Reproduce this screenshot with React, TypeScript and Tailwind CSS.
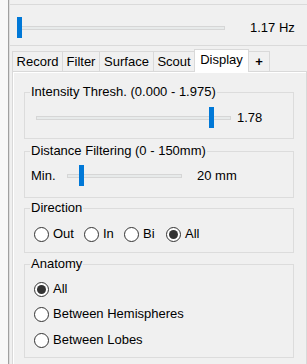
import React from "react";

function Slider({ widthCls, thumbCls }: { widthCls: string; thumbCls: string }) {
  return (
    <div className={`relative h-[21px] flex items-center shrink-0 ${widthCls}`}>
      <div className="w-full h-[4px] border border-[#d6d6d6] bg-[#e7eaea]" />
      <div className={`absolute top-0 w-[5px] h-[21px] bg-[#0078d7] ${thumbCls}`} />
    </div>
  );
}

function Radio({ checked }: { checked?: boolean }) {
  return (
    <div className="w-[15px] h-[15px] rounded-full border border-[#333333] bg-white flex items-center justify-center shrink-0">
      {checked && <div className="w-[9px] h-[9px] rounded-full bg-[#333333]" />}
    </div>
  );
}

function Group({
  title,
  mtCls,
  padCls,
  children,
}: {
  title: string;
  mtCls: string;
  padCls: string;
  children: React.ReactNode;
}) {
  return (
    <fieldset className={`w-[270px] border border-[#dcdcdc] pl-[5px] pr-[5px] m-0 min-w-0 ${mtCls} ${padCls}`}>
      <legend className="px-[1px] leading-[14px] text-[13px]">{title}</legend>
      {children}
    </fieldset>
  );
}

export default function App() {
  const tabBase =
    "h-[20px] flex items-center justify-center border-t border-[#d9d9d9] bg-[#f0f0f0] leading-[14px]";
  return (
    <div className="w-[307px] h-[364px] overflow-hidden bg-[#f0f0f0] flex font-['Liberation_Sans',Arial,sans-serif] text-[13px] text-black">
      <div className="w-[8px] bg-[#f8f8f8]" />
      <div className="w-[1px] bg-[#a0a0a0]" />
      <div className="w-[1px] bg-[#dedede]" />
      <div className="w-[297px] flex flex-col">
        <div className="h-[4px]" />
        <div className="h-[1px] bg-[#dadada]" />
        <div className="h-[40px] pl-[7px] pt-[12px] flex items-start">
          <Slider widthCls="w-[208px]" thumbCls="left-0" />
          <div className="ml-[25px] h-[21px] flex items-center">1.17 Hz</div>
        </div>
        <div className="h-[1px] bg-[#dadada]" />
        <div className="h-[25px] pl-[2px] flex items-end">
          <div className={`${tabBase} w-[50px] border-l`}>Record</div>
          <div className={`${tabBase} w-[37px] border-l`}>Filter</div>
          <div className={`${tabBase} w-[54px] border-l`}>Surface</div>
          <div className={`${tabBase} w-[41px] border-l`}>Scout</div>
          <div className="relative z-10 -mb-[1px] h-[23px] w-[55px] border-t border-l border-r border-[#d9d9d9] bg-white flex items-start justify-center pt-[3px] leading-[14px]">
            Display
          </div>
          <div className={`${tabBase} w-[21px] border-r font-bold`}>+</div>
        </div>
        <div className="flex-1 ml-[2px] border-t border-l border-r border-[#d9d9d9]">
          <div className="h-full border-t border-l border-white pl-[10px] flex flex-col">
            <Group title="Intensity Thresh. (0.000 - 1.975)" mtCls="mt-[12px]" padCls="pt-[8px] pb-[10px]">
              <div className="flex items-center ml-[6px]">
                <Slider widthCls="w-[195px]" thumbCls="left-[173px]" />
                <div className="ml-[6px]">1.78</div>
              </div>
            </Group>
            <Group title="Distance Filtering (0 - 150mm)" mtCls="mt-[5px]" padCls="pt-[7px] pb-[11px]">
              <div className="flex items-center ml-[1px]">
                <div className="w-[36px]">Min.</div>
                <Slider widthCls="w-[115px]" thumbCls="left-[12px]" />
                <div className="ml-[15px]">20 mm</div>
              </div>
            </Group>
            <Group title="Direction" mtCls="mt-[3px]" padCls="pt-[11px] pb-[10px]">
              <div className="flex items-center ml-[4px] h-[16px]">
                <div className="w-[50px] flex items-center gap-[4px]">
                  <Radio />
                  <span>Out</span>
                </div>
                <div className="w-[40px] flex items-center gap-[4px]">
                  <Radio />
                  <span>In</span>
                </div>
                <div className="w-[42px] flex items-center gap-[4px]">
                  <Radio />
                  <span>Bi</span>
                </div>
                <div className="flex items-center gap-[4px]">
                  <Radio checked />
                  <span>All</span>
                </div>
              </div>
            </Group>
            <Group title="Anatomy" mtCls="mt-[4px]" padCls="pt-[10px] pb-[9px]">
              <div className="flex flex-col ml-[4px]">
                <div className="h-[16px] flex items-center gap-[4px]">
                  <Radio checked />
                  <span>All</span>
                </div>
                <div className="mt-[9px] h-[16px] flex items-center gap-[4px]">
                  <Radio />
                  <span>Between Hemispheres</span>
                </div>
                <div className="mt-[10px] h-[16px] flex items-center gap-[4px]">
                  <Radio />
                  <span>Between Lobes</span>
                </div>
              </div>
            </Group>
          </div>
        </div>
      </div>
    </div>
  );
}
